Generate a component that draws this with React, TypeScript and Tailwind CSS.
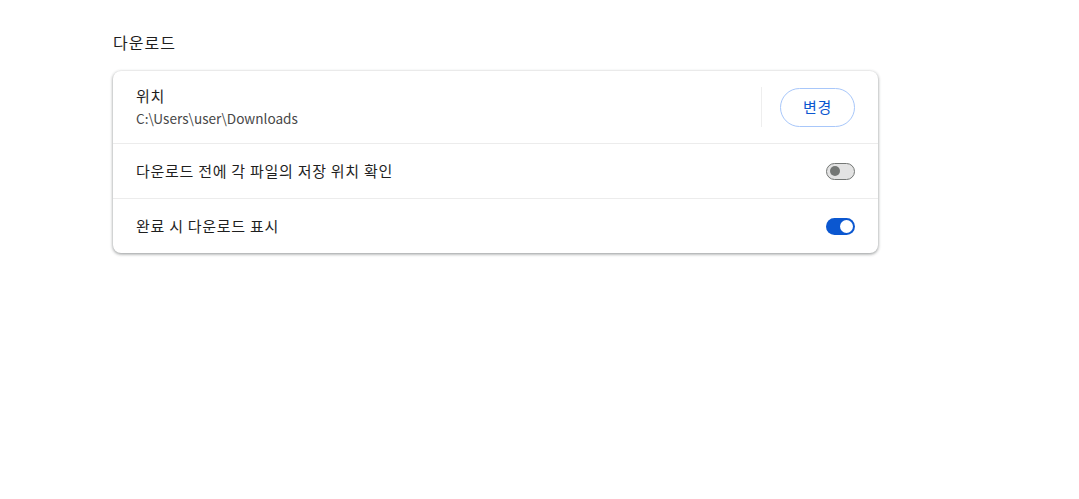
export default function App() {
  const font = { fontFamily: '"Segoe UI", "Noto Sans CJK KR", Roboto, sans-serif' };
  return (
    <div className="w-[1079px] h-[499px] bg-white" style={font}>
      <div className="pl-[113px] pt-[30px] w-[878px]">
        <div className="text-[16px] leading-[24px] tracking-[1px] text-[#1f1f1f] mb-[17px]">다운로드</div>
        <div className="rounded-[8px] bg-white shadow-[0_1px_3px_1px_rgba(60,64,67,0.15),0_1px_3px_0_rgba(60,64,67,0.4)]">
          <div className="flex items-center h-[72px] pl-[23px] pr-[23px]">
            <div className="flex-1 flex flex-col">
              <div className="text-[15px] leading-[20px] tracking-[0.75px] text-[#1f1f1f]">위치</div>
              <div className="text-[13.6px] leading-[20px] text-[#474747] mt-[2px]">C:\Users\user\Downloads</div>
            </div>
            <div className="w-px h-[40px] bg-[#eeeeee] mr-[18px]"></div>
            <button className="w-[75px] h-[39px] rounded-full border border-[#a8c7fa] text-[#0b57d0] text-[15px] tracking-[0.75px] bg-white">변경</button>
          </div>
          <div className="flex items-center h-[55px] pl-[23px] pr-[23px] border-t border-[#ececec]">
            <div className="flex-1 text-[15px] tracking-[0.73px] text-[#1f1f1f]">다운로드 전에 각 파일의 저장 위치 확인</div>
            <div className="w-[29px] h-[17px] rounded-full bg-[#e3e3e3] border border-[#747775] flex items-center pl-[3px]">
              <div className="w-[10px] h-[10px] rounded-full bg-[#747775]"></div>
            </div>
          </div>
          <div className="flex items-center h-[55px] pl-[23px] pr-[23px] border-t border-[#ececec]">
            <div className="flex-1 text-[15px] tracking-[0.73px] text-[#1f1f1f]">완료 시 다운로드 표시</div>
            <div className="w-[29px] h-[17px] rounded-full bg-[#0b57d0] flex items-center justify-end pr-[2px]">
              <div className="w-[13px] h-[13px] rounded-full bg-white"></div>
            </div>
          </div>
        </div>
      </div>
    </div>
  );
}
